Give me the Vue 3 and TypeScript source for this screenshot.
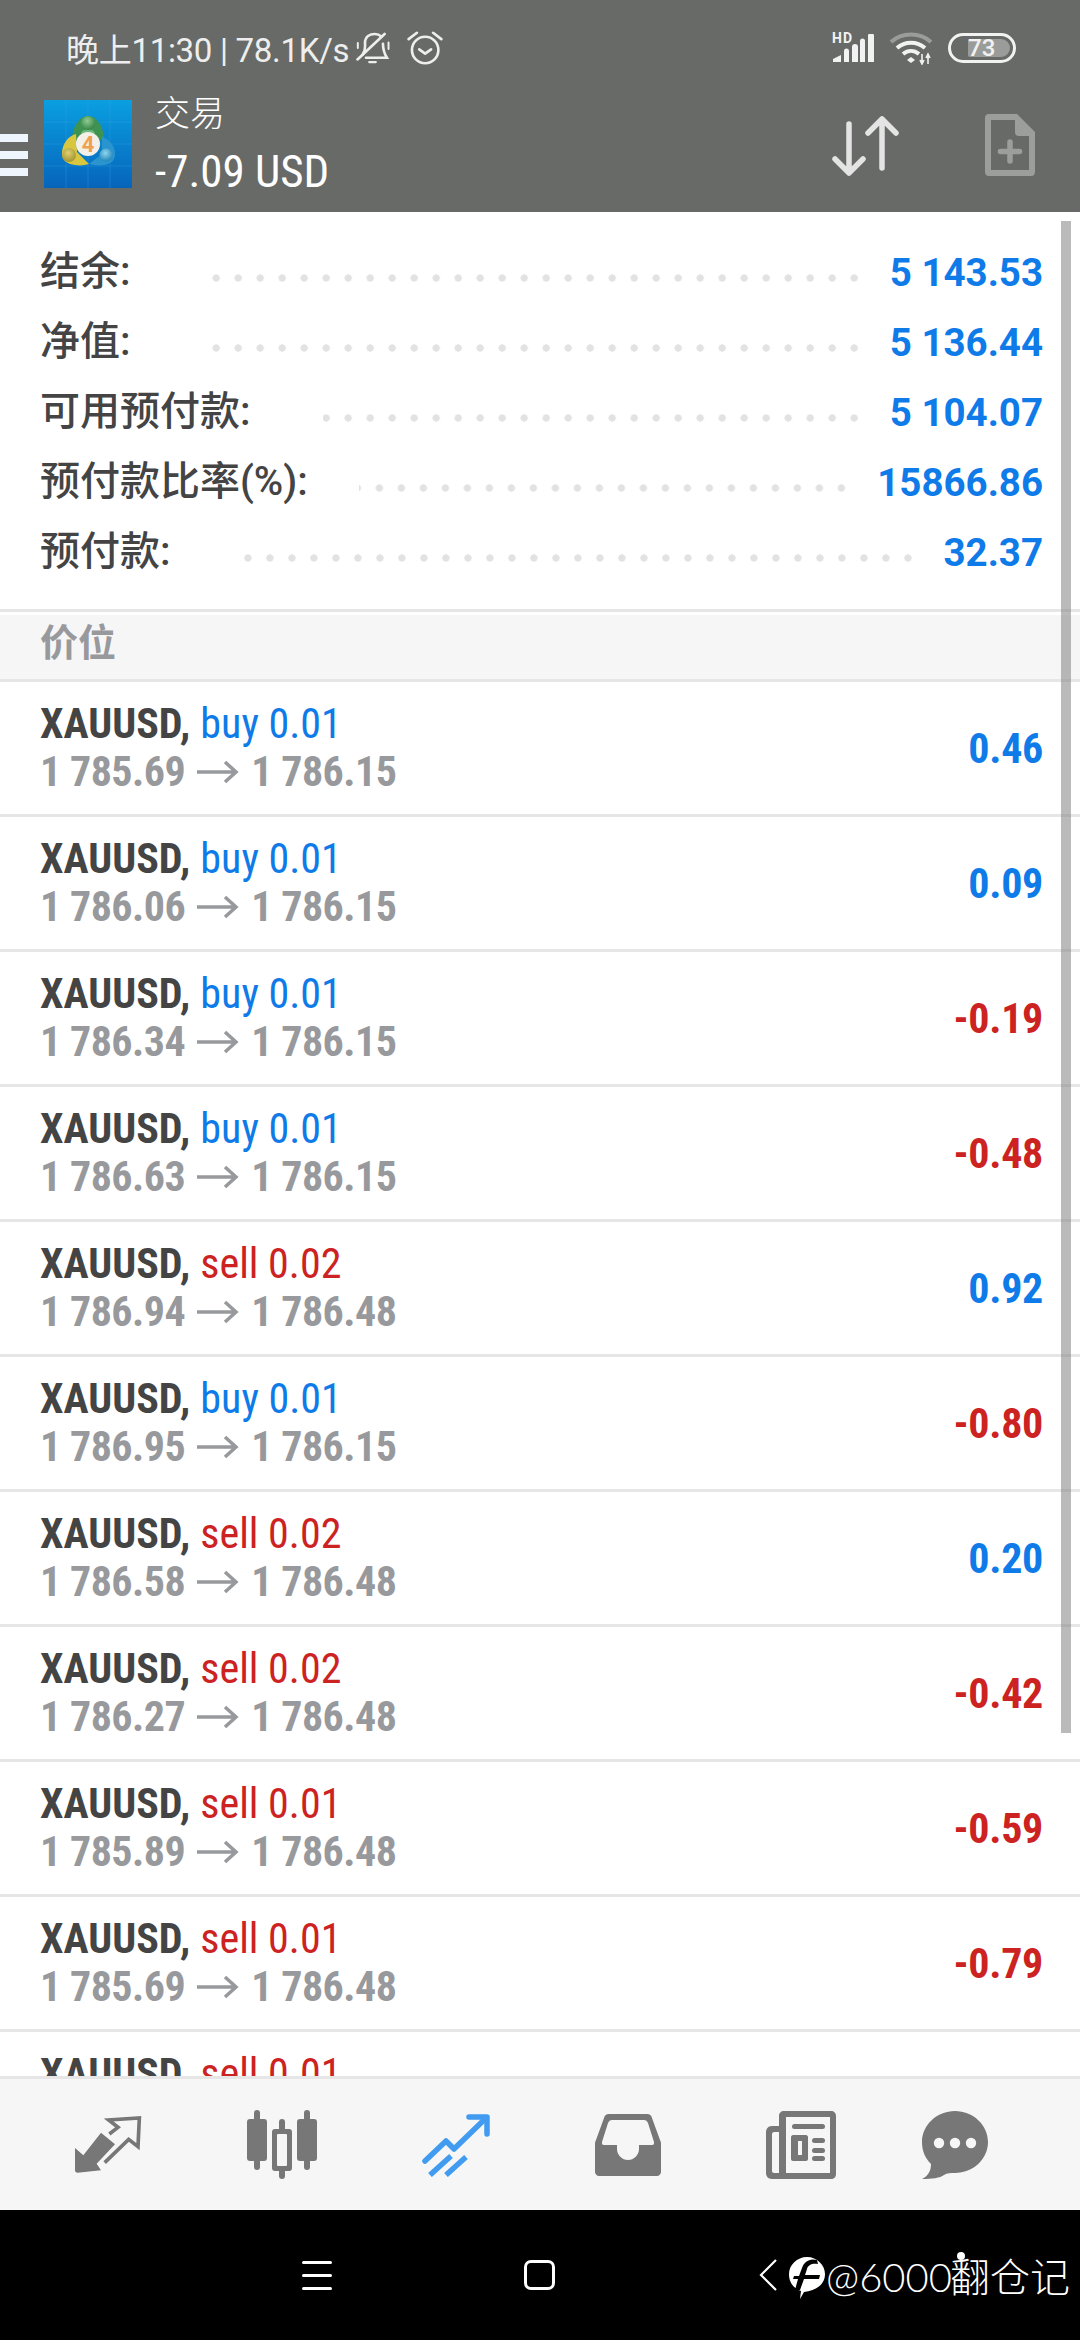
<script setup lang="ts">
interface Summary {
  label: string
  value: string
  cls: string
}
interface Position {
  side: 'buy' | 'sell'
  lots: string
  open: string
  close: string
  profit: string
}

const summary: Summary[] = [
  { label: '结余:', value: '5 143.53', cls: 'd1' },
  { label: '净值:', value: '5 136.44', cls: 'd1' },
  { label: '可用预付款:', value: '5 104.07', cls: 'd1' },
  { label: '预付款比率(%):', value: '15866.86', cls: 'd4' },
  { label: '预付款:', value: '32.37', cls: 'd1' },
]

const positions: Position[] = [
  { side: 'buy', lots: '0.01', open: '1 785.69', close: '1 786.15', profit: '0.46' },
  { side: 'buy', lots: '0.01', open: '1 786.06', close: '1 786.15', profit: '0.09' },
  { side: 'buy', lots: '0.01', open: '1 786.34', close: '1 786.15', profit: '-0.19' },
  { side: 'buy', lots: '0.01', open: '1 786.63', close: '1 786.15', profit: '-0.48' },
  { side: 'sell', lots: '0.02', open: '1 786.94', close: '1 786.48', profit: '0.92' },
  { side: 'buy', lots: '0.01', open: '1 786.95', close: '1 786.15', profit: '-0.80' },
  { side: 'sell', lots: '0.02', open: '1 786.58', close: '1 786.48', profit: '0.20' },
  { side: 'sell', lots: '0.02', open: '1 786.27', close: '1 786.48', profit: '-0.42' },
  { side: 'sell', lots: '0.01', open: '1 785.89', close: '1 786.48', profit: '-0.59' },
  { side: 'sell', lots: '0.01', open: '1 785.69', close: '1 786.48', profit: '-0.79' },
  { side: 'sell', lots: '0.01', open: '1 785.50', close: '1 786.48', profit: '-0.98' },
]

const isLoss = (p: Position) => p.profit.startsWith('-')
</script>

<template>
  <div class="phone">
    <header class="top">
      <div class="status">
        <span class="status-text">晚上11:30 | 78.1K/s</span>
        <svg class="bell" viewBox="48 26 106 98" width="35" height="32" fill="none" stroke="#eee" stroke-width="8" stroke-linecap="round">
          <path d="M68 95C78 80 75 75 75 60 75 40 90 32 105 32c10 0 15 3 20 8" />
          <path d="M130 62c0 18 3 28 12 43H78" />
          <path d="M52 110 135 32" />
          <path d="M88 118h20" stroke-width="7" />
          <path d="M53 60v15M147 58v20" stroke-width="6" />
        </svg>
        <svg class="alarm" viewBox="195 20 112 108" width="37" height="36" fill="none" stroke="#eee" stroke-width="8" stroke-linecap="round" stroke-linejoin="round">
          <circle cx="253" cy="80" r="40" />
          <path d="M235 78l18 13 18-13" />
          <path d="M203 47l25-19M302 47l-25-19" />
        </svg>
        <div class="status-right">
          <div class="signal">
            <span class="hd">HD</span>
            <svg viewBox="0 0 41 28" width="41" height="28" fill="#f2f2f2">
              <path d="M0 28v-3l8-4v7zM11 28V17a2 2 0 0 1 5 0v11zM19 28V13a2 2 0 0 1 6 0v15zM27 28V7a2 2 0 0 1 5 0v21zM35 28V2a2 2 0 0 1 6 0v26z" />
            </svg>
          </div>
          <svg class="wifi" viewBox="0 0 44 34" width="44" height="34" fill="none" stroke-linecap="butt">
            <path d="M2 11C13 1 31 1 42 11" stroke="#9a9c99" stroke-width="4" />
            <path d="M8 17c8-7 20-7 28 0" stroke="#f2f2f2" stroke-width="4" />
            <path d="M14 23c5-4 11-4 16 0" stroke="#f2f2f2" stroke-width="4" />
            <path d="M18 29l4-3 4 3-4 3z" fill="#f2f2f2" />
            <path d="M33 23v10M39 23v10M31 29l2 4 2-4M37 27l2-4 2 4" stroke="#f2f2f2" stroke-width="1.6" />
          </svg>
          <div class="battery">
            <div class="battery-fill" />
            <span>73</span>
          </div>
        </div>
      </div>
      <div class="bar">
        <div class="burger"><i /><i /><i /></div>
        <svg class="logo" viewBox="0 0 88 88" width="88" height="88">
          <defs>
            <linearGradient id="sky" x1="0" y1="0" x2="0" y2="1">
              <stop offset="0" stop-color="#0a9fe0" />
              <stop offset="1" stop-color="#0664bb" />
            </linearGradient>
            <radialGradient id="ball" cx="0.45" cy="0.35" r="0.7">
              <stop offset="0" stop-color="#8ed6ee" />
              <stop offset="1" stop-color="#1c7fb5" />
            </radialGradient>
            <radialGradient id="head" cx="0.45" cy="0.35" r="0.7">
              <stop offset="0" stop-color="#8fcb92" />
              <stop offset="1" stop-color="#2f8040" />
            </radialGradient>
            <radialGradient id="sun" cx="0.45" cy="0.35" r="0.7">
              <stop offset="0" stop-color="#e0d070" />
              <stop offset="1" stop-color="#9c8f2c" />
            </radialGradient>
          </defs>
          <rect width="88" height="88" fill="url(#sky)" />
          <path d="M0 22h88M0 44h88M0 66h88M22 0v88M44 0v88M66 0v88" stroke="#3fa9e0" stroke-opacity=".3" stroke-width="1" />
          <path d="M44 16c-8 0-15 9-16 22l16 10 16-10c-1-13-8-22-16-22z" fill="#3f9352" />
          <path d="M37 33c2-5 12-5 14 0l-7 8z" fill="#6cb87a" />
          <circle cx="44" cy="23" r="7" fill="url(#head)" />
          <path d="M32 34c-8 2-13 9-14 18-1 8 5 12 13 13 6 1 10 0 14-1L33 52z" fill="#d8c63f" />
          <circle cx="25" cy="55" r="7" fill="url(#sun)" />
          <path d="M58 37c7 2 12 8 13 15 1 8-4 12-11 13-6 1-11 0-15-1l13-10z" fill="#2a94cf" />
          <circle cx="62" cy="55" r="6.500" fill="url(#ball)" />
          <circle cx="44" cy="44" r="12" fill="#f4f0e8" />
          <text x="44" y="52" text-anchor="middle" class="logo-four">4</text>
        </svg>
        <div class="title">
          <div class="title-top">交易</div>
          <div class="title-main">-7.09 USD</div>
        </div>
        <svg class="arrows" viewBox="0 0 68 60" width="68" height="60" fill="none" stroke="#e4e4e4" stroke-width="5.500" stroke-linecap="round" stroke-linejoin="round">
          <path d="M17 8v49M3 43l14 14 14-14" />
          <path d="M50 3v49M36 17 50 3l14 14" />
        </svg>
        <svg class="file" viewBox="0 0 50 62" width="50" height="62">
          <path fill-rule="evenodd" fill="#9c9e9b" d="M4 0h28l18 18v40a4 4 0 0 1-4 4H4a4 4 0 0 1-4-4V4a4 4 0 0 1 4-4zm2 6v50h38V22H34a4 4 0 0 1-4-4V6z" />
          <path d="M25 28v19M15.500 37.500h19" stroke="#9c9e9b" stroke-width="5.500" stroke-linecap="round" />
        </svg>
      </div>
    </header>

    <main class="content">
      <section class="summary">
        <div v-for="row in summary" :key="row.label" class="sum-row">
          <span class="sum-label">{{ row.label }}</span>
          <span class="dots" :class="row.cls" />
          <span class="sum-value">{{ row.value }}</span>
        </div>
      </section>
      <div class="section-head">价位</div>
      <div class="list">
        <div v-for="p in positions" :key="p.open" class="pos">
          <div class="pos-left">
            <div class="pos-name">
              <b>XAUUSD,</b>
              <span :class="p.side">{{ p.side }} {{ p.lots }}</span>
            </div>
            <div class="pos-price">
              <span>{{ p.open }}</span>
              <svg viewBox="0 0 42 24" width="42" height="24" fill="none" stroke="#98999c" stroke-width="3.500">
                <path d="M0 12h39M28 2l11 10-11 10" />
              </svg>
              <span>{{ p.close }}</span>
            </div>
          </div>
          <div class="pos-profit" :class="isLoss(p) ? 'sell' : 'buy'">{{ p.profit }}</div>
        </div>
      </div>
      <div class="scrollbar" />
    </main>

    <nav class="tabs">
      <svg viewBox="45 40 202 174" width="68" height="58">
        <path fill="#777" d="M47 136l25 22 53-68 42 35-55 58 13 20-70 7c-5 0-8-2-8-7z" />
        <path fill="none" stroke="#777" stroke-width="11" d="M136 180l72-70 28 22 4-86-92 6 28 22-26 20" />
      </svg>
      <svg viewBox="0 0 70 70" width="70" height="70" fill="#777">
        <rect x="0" y="9" width="20" height="42" rx="3" />
        <rect x="7" y="0" width="6" height="60" rx="3" />
        <rect x="50" y="9" width="20" height="42" rx="3" />
        <rect x="57" y="0" width="6" height="60" rx="3" />
        <rect x="32" y="9" width="6" height="60" rx="3" />
        <rect x="25" y="19" width="20" height="42" rx="3" />
        <rect x="30" y="24" width="10" height="32" rx="1" fill="#f6f6f6" />
      </svg>
      <svg viewBox="0 0 68 64" width="68" height="64" fill="none" stroke="#419bf0" stroke-width="5.500" stroke-linecap="round" stroke-linejoin="round">
        <path d="M3 48 24 28l8 8 32-31" />
        <path d="M47 4h18v17" />
        <path d="M8 62l21-19M24 62l20-18" stroke-linecap="butt" />
      </svg>
      <svg viewBox="0 0 66 62" width="66" height="62" fill="#777">
        <path fill-rule="evenodd" d="M14 0h38c3 0 4 1 5 4l8 22c1 2 1 3 1 5v27c0 2-2 4-4 4H4c-2 0-4-2-4-4V31c0-2 0-3 1-5L9 4c1-3 2-4 5-4zm3 6c-2 0-3 1-4 3L7 28c0 2 0 3 2 3h13v4c0 6 5 11 11 11s11-5 11-11v-4h13c2 0 2-1 2-3L53 9c-1-2-2-3-4-3z" />
      </svg>
      <svg viewBox="0 0 70 68" width="70" height="68" fill="#777">
        <path fill-rule="evenodd" d="M18 0h47c3 0 5 2 5 5v58c0 3-2 5-5 5H6c-4 0-6-3-6-6V21c0-3 2-6 6-6h7V5c0-3 2-5 5-5zm2 6v56h44V6zM13 21H8c-1 0-2 1-2 2v37c0 1 1 2 2 2h5z" />
        <rect x="26" y="13" width="33" height="5" rx="2.500" />
        <path fill-rule="evenodd" d="M27 24h13c1 0 2 1 2 2v22c0 1-1 2-2 2H27c-1 0-2-1-2-2V26c0-1 1-2 2-2zm5 6v14h4V30z" />
        <rect x="46" y="27" width="13" height="5" rx="2.500" />
        <rect x="46" y="37" width="13" height="5" rx="2.500" />
        <rect x="46" y="45" width="13" height="5" rx="2.500" />
      </svg>
      <svg class="chat" viewBox="0 0 66 68" width="66" height="68" fill="#777">
        <path d="M33 0c18 0 33 14 33 31S51 62 33 62c-4 0-8 0-11 2-4 3-12 4-22 4 6-3 9-8 9-15C3 47 0 40 0 31 0 14 15 0 33 0z" />
        <circle cx="17" cy="32" r="5.200" fill="#f6f6f6" />
        <circle cx="33" cy="32" r="5.200" fill="#f6f6f6" />
        <circle cx="49" cy="32" r="5.200" fill="#f6f6f6" />
      </svg>
    </nav>

    <footer class="sysnav">
      <div class="nav-menu"><i /><i /><i /></div>
      <div class="nav-square" />
      <svg class="nav-back" viewBox="0 0 18 32" width="18" height="32" fill="none" stroke="#fff" stroke-width="2.200">
        <path d="M17 1 2 16l15 15" />
      </svg>
      <svg class="nav-f" viewBox="0 0 36 42" width="36" height="42">
        <path fill="#fff" d="M18 0c10 0 18 8 18 17 0 11-10 17-21 18l-4 7 1-8C4 31 0 25 0 17 0 8 8 0 18 0z" />
        <path fill="#000" d="M28 3c-8-2-13 2-15 8l-3 8H5l-1 3h5l-3 11h5l4-11h15l1-4H16l2-6c1-4 5-6 11-5z" />
      </svg>
      <span class="nav-text">@6000<span class="nav-cn">翻仓记</span></span>
      <i class="nav-dot" />
    </footer>
  </div>
</template>

<style scoped>
.phone {
  width: 1080px;
  height: 2340px;
  display: flex;
  flex-direction: column;
  overflow: hidden;
  background: #fff;
  font-family: Roboto, "Noto Sans CJK SC", sans-serif;
}
.top {
  height: 212px;
  flex: none;
  background: #686a67;
  color: #fff;
}
.status {
  height: 98px;
  display: flex;
  align-items: center;
  padding: 0 64px 3px 66px;
  box-sizing: border-box;
}
.status-text {
  font-size: 33px;
  color: #eee;
  white-space: nowrap;
  letter-spacing: -0.3px;
}
.bell {
  margin-left: 7px;
}
.alarm {
  margin-left: 15px;
}
.status-right {
  margin-left: auto;
  display: flex;
  align-items: center;
}
.signal {
  position: relative;
  width: 41px;
  height: 30px;
  padding-top: 2px;
}
.signal svg {
  display: block;
}
.hd {
  position: absolute;
  left: -1px;
  top: 0;
  font-size: 14px;
  font-weight: 700;
  line-height: 13px;
  letter-spacing: 1px;
  color: #f2f2f2;
}
.wifi {
  margin-left: 15px;
}
.battery {
  position: relative;
  margin-left: 15px;
  width: 68px;
  height: 30px;
  box-sizing: border-box;
  border: 3px solid #f2f2f2;
  border-radius: 16px;
  padding: 3px;
}
.battery-fill {
  width: 42px;
  height: 100%;
  background: #9a9c99;
  border-radius: 2px 10px 10px 2px;
  margin-left: auto;
}
.battery span {
  position: absolute;
  left: 17px;
  top: -2px;
  font-size: 24px;
  line-height: 29px;
  font-weight: 500;
  color: #f2f2f2;
}
.bar {
  height: 114px;
  display: flex;
  align-items: center;
  position: relative;
}
.burger {
  width: 28px;
  margin-right: 16px;
  display: flex;
  flex-direction: column;
  gap: 9px;
}
.burger i {
  height: 8px;
  background: #eef5fc;
}
.logo {
  margin-top: -22px;
  flex: none;
}
.title {
  margin-left: 23px;
  margin-top: -21px;
}
.title-top {
  font-size: 35px;
  line-height: 46px;
  font-weight: 300;
}
.title-main {
  font-size: 45px;
  line-height: 52px;
  margin-top: 8px;
  font-stretch: 75%;
  white-space: nowrap;
}
.arrows {
  position: absolute;
  left: 832px;
  top: 18px;
}
.file {
  position: absolute;
  left: 985px;
  top: 16px;
}
.content {
  flex: 1;
  min-height: 0;
  position: relative;
  overflow: hidden;
}
.summary {
  padding: 25px 37px 0 40px;
  box-sizing: border-box;
  border-bottom: 3px solid #e6e6e6;
  margin-bottom: 3px;
  height: 400px;
}
.sum-row {
  height: 70px;
  display: flex;
  align-items: center;
}
.sum-label {
  font-size: 40px;
  font-weight: 500;
  color: #444;
  white-space: nowrap;
  margin-top: -8px;
}
.dots {
  flex: 1;
  height: 8px;
  margin: 12px 25px 0 72px;
  background-image: radial-gradient(circle at center, #e2e2e2 3.400px, transparent 3.900px);
  background-size: 22px 8px;
  background-repeat: repeat-x;
  background-position: right center;
}
.d4 {
  margin-left: 51px;
}
.sum-value {
  font-size: 38.500px;
  font-weight: 700;
  color: #0f7be8;
  white-space: nowrap;
}
.section-head {
  height: 64px;
  line-height: 57px;
  padding-left: 40px;
  background: #f6f6f6;
  border-bottom: 3px solid #e6e6e6;
  color: #98999c;
  font-size: 38px;
  font-weight: 700;
}
.pos {
  height: 135px;
  box-sizing: border-box;
  border-bottom: 3px solid #e6e6e6;
  padding: 0 37px 0 40px;
  display: flex;
  align-items: center;
  justify-content: space-between;
}
.pos-name,
.pos-price {
  font-size: 42px;
  line-height: 48px;
  white-space: nowrap;
  font-stretch: 75%;
}
.pos-name {
  display: flex;
  gap: 10px;
}
.pos-name b {
  color: #444;
}
.pos-price {
  display: flex;
  align-items: center;
  gap: 12px;
  font-weight: 700;
  color: #98999c;
  letter-spacing: -0.5px;
}
.pos-profit {
  font-size: 42px;
  font-weight: 700;
  font-stretch: 75%;
  letter-spacing: -0.3px;
}
.buy {
  color: #0f7be8;
}
.sell {
  color: #cc2222;
}
.scrollbar {
  position: absolute;
  left: 1061px;
  top: 9px;
  width: 10px;
  height: 1512px;
  background: rgba(130, 130, 130, 0.55);
}
.tabs {
  height: 135px;
  flex: none;
  box-sizing: border-box;
  border-top: 3px solid #e6e6e6;
  background: #f6f6f6;
  display: flex;
  align-items: center;
  padding-left: 74px;
  gap: 105px;
}
.chat {
  margin-left: -19px;
}
.sysnav {
  height: 130px;
  flex: none;
  background: #000;
  display: flex;
  align-items: center;
  position: relative;
  color: #fff;
  padding: 0 0 0 302px;
  margin-top: -1px;
}
.nav-menu {
  width: 30px;
  display: flex;
  flex-direction: column;
  gap: 10px;
}
.nav-menu i {
  height: 3px;
  background: #fff;
  border-radius: 2px;
}
.nav-square {
  width: 31px;
  height: 30px;
  box-sizing: border-box;
  border: 3px solid #fff;
  border-radius: 7px;
  margin-left: 192px;
}
.nav-back {
  margin-left: 204px;
}
.nav-f {
  margin-left: 12px;
  margin-top: 6px;
}
.nav-text {
  margin-left: 1px;
  font-size: 40px;
  font-weight: 300;
  white-space: nowrap;
  font-family: Lato, "Noto Sans CJK SC", sans-serif;
}
.nav-cn {
  margin-left: -2px;
}
.nav-dot {
  position: absolute;
  left: 957px;
  top: 42px;
  width: 8px;
  height: 8px;
  border-radius: 50%;
  background: #fff;
}
.logo-four {
  font-size: 22px;
  font-weight: 700;
  fill: #f0a050;
  font-family: Roboto, sans-serif;
}
</style>
